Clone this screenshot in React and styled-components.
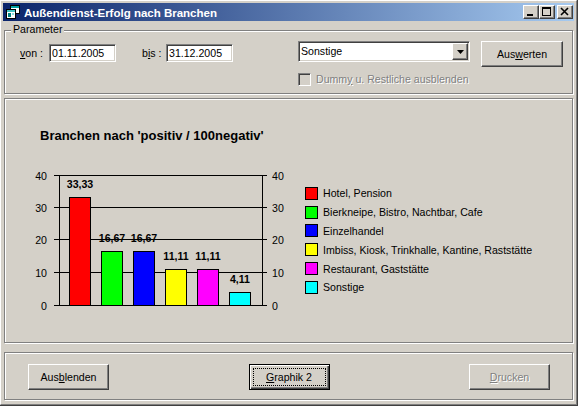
import React from 'react';
import styled, { createGlobalStyle, css } from 'styled-components';

const GlobalStyle = createGlobalStyle`
  html, body { margin: 0; padding: 0; background: #D4D0C8; }
  body { font-family: "Liberation Sans", Arial, sans-serif; font-size: 10.6px; color: #000; }
  * { box-sizing: border-box; }
`;

const FACE = '#D4D0C8';

const raised = css`
  border: 1px solid;
  border-color: #fff #404040 #404040 #fff;
  box-shadow: inset -1px -1px 0 #808080;
  background: ${FACE};
`;

const sunken = css`
  border: 1px solid;
  border-color: #808080 #fff #fff #808080;
  box-shadow: inset 1px 1px 0 #404040, inset -1px -1px 0 ${FACE};
`;

const etched = css`
  border: 1px solid #808080;
  box-shadow: inset 1px 1px 0 #fff, 1px 1px 0 #fff;
`;

const Window = styled.div`
  width: 578px;
  height: 406px;
  border-style: solid;
  border-color: #404040;
  border-width: 0 1px 1px 0;
  background: ${FACE};
`;

const Frame = styled.div`
  height: 100%;
  border: 1px solid;
  border-color: #fff #808080 #808080 #fff;
  padding: 2px;
  display: flex;
  flex-direction: column;
`;

const TitleBar = styled.div`
  height: 18px;
  flex: none;
  display: flex;
  align-items: flex-start;
  padding: 0 1px 0 2px;
  background: linear-gradient(to right, #0A246A, #A6CAF0);
`;

const TitleIcon = styled.svg`
  width: 16px;
  height: 16px;
  margin-top: 1px;
  flex: none;
`;

const TitleText = styled.div`
  flex: 1;
  margin-left: 3px;
  padding-top: 3px;
  line-height: 14px;
  font-size: 11.5px;
  font-weight: bold;
  color: #fff;
  white-space: nowrap;
`;

const CaptionButtons = styled.div`
  display: flex;
  margin-top: 2px;
`;

const CaptionButton = styled.div`
  ${raised};
  width: 16px;
  height: 14px;
  margin-left: ${(p) => (p.$gap ? '2px' : '0')};
  display: flex;
`;

const Content = styled.div`
  flex: 1;
  display: flex;
  flex-direction: column;
  padding: 9px 1px 0 1px;
`;

const GroupBox = styled.div`
  ${etched};
  position: relative;
  height: 64px;
  flex: none;
  padding: 10px 0 0 15px;
`;

const GroupLegend = styled.div`
  position: absolute;
  top: -8px;
  left: 6px;
  padding: 0 2px;
  line-height: 13px;
  background: ${FACE};
`;

const Row = styled.div`
  display: flex;
  align-items: flex-start;
`;

const FieldLabel = styled.label`
  width: ${(p) => p.$w}px;
  margin-left: ${(p) => p.$ml || 0}px;
  margin-top: 3px;
  height: 18px;
  line-height: 18px;
  white-space: nowrap;
`;

const DateInput = styled.input`
  ${sunken};
  width: 67px;
  height: 18px;
  margin-top: 3px;
  padding: 0 0 0 2px;
  background: #fff;
  font-family: inherit;
  font-size: 10.6px;
  color: #000;
  outline: none;
`;

const RightColumn = styled.div`
  margin-left: 65px;
  display: flex;
  flex-direction: column;
`;

const SelectBox = styled.div`
  ${sunken};
  width: 172px;
  height: 21px;
  padding: 1px;
  background: #fff;
  display: flex;
`;

const SelectValue = styled.div`
  flex: 1;
  padding-left: 1px;
  line-height: 17px;
`;

const DropButton = styled.div`
  ${raised};
  width: 16px;
  height: 17px;
  display: flex;
  align-items: center;
  justify-content: center;
`;

const CheckRow = styled.div`
  display: flex;
  align-items: center;
  gap: 5px;
  margin-top: 11px;
  height: 13px;
`;

const CheckBox = styled.div`
  ${sunken};
  width: 13px;
  height: 13px;
  background: ${FACE};
`;

const DisabledText = styled.span`
  color: #808080;
  text-shadow: 1px 1px 0 #fff;
  line-height: 13px;
  white-space: nowrap;
`;

const Button = styled.button`
  width: ${(p) => p.$w}px;
  height: ${(p) => p.$h}px;
  margin-left: ${(p) => p.$ml || 0}px;
  padding: 0;
  font-family: inherit;
  font-size: 10.6px;
  color: ${(p) => (p.disabled ? '#808080' : '#000')};
  text-shadow: ${(p) => (p.disabled ? '1px 1px 0 #fff' : 'none')};
  display: flex;
  align-items: center;
  justify-content: center;
  cursor: default;
  ${(p) =>
    p.$default
      ? css`
          border: 1px solid #000;
          background: ${FACE};
          box-shadow: inset 1px 1px 0 #fff, inset -1px -1px 0 #404040, inset -2px -2px 0 #808080;
          align-items: stretch;
        `
      : raised};
`;

const FocusRect = styled.span`
  flex: 1;
  margin: 3px;
  border: 1px dotted #000;
  display: flex;
  align-items: center;
  justify-content: center;
`;

const ChartPanel = styled.div`
  ${etched};
  height: 245px;
  flex: none;
  margin-top: 4px;
  padding: 29px 0 0 25px;
  display: flex;
  flex-direction: column;
`;

const ChartTitle = styled.div`
  margin-left: 10px;
  font-size: 13px;
  font-weight: bold;
  line-height: 15px;
  white-space: nowrap;
`;

const ChartRow = styled.div`
  display: flex;
  align-items: flex-start;
  margin-top: 22px;
`;

const ChartSvg = styled.svg`
  width: 260px;
  height: 150px;
  flex: none;
  overflow: visible;
`;

const AxisLabel = styled.text`
  font-family: "Liberation Sans", Arial, sans-serif;
  font-size: 10.6px;
  fill: #000;
`;

const ValueLabel = styled.text`
  font-family: "Liberation Sans", Arial, sans-serif;
  font-size: 10.6px;
  font-weight: bold;
  fill: #000;
`;

const Legend = styled.div`
  margin-left: 15px;
  margin-top: 19px;
  display: flex;
  flex-direction: column;
`;

const LegendItem = styled.div`
  height: 18.8px;
  display: flex;
  align-items: center;
  gap: 5px;
  white-space: nowrap;
`;

const Swatch = styled.span`
  width: 13px;
  height: 13px;
  border: 1px solid #000;
  background: ${(p) => p.$color};
  flex: none;
`;

const BottomPanel = styled.div`
  ${etched};
  height: 48px;
  flex: none;
  margin-top: 9px;
  padding: 11px 22px 0 23px;
  display: flex;
  justify-content: space-between;
  align-items: flex-start;
`;

const data = [
  { label: 'Hotel, Pension', value: 33.33, text: '33,33', color: '#FF0000' },
  { label: 'Bierkneipe, Bistro, Nachtbar, Cafe', value: 16.67, text: '16,67', color: '#00FF00' },
  { label: 'Einzelhandel', value: 16.67, text: '16,67', color: '#0000FF' },
  { label: 'Imbiss, Kiosk, Trinkhalle, Kantine, Raststätte', value: 11.11, text: '11,11', color: '#FFFF00' },
  { label: 'Restaurant, Gaststätte', value: 11.11, text: '11,11', color: '#FF00FF' },
  { label: 'Sonstige', value: 4.11, text: '4,11', color: '#00FFFF' },
];

const grid = [
  { v: 40, y: 10 },
  { v: 30, y: 42 },
  { v: 20, y: 74 },
  { v: 10, y: 107 },
  { v: 0, y: 140 },
];

function Chart() {
  const zero = 140;
  const k = 3.25;
  return (
    <ChartSvg viewBox="0 0 260 150">
      {grid.map((g) => (
        <line key={g.v} x1="24" x2="237" y1={g.y + 0.5} y2={g.y + 0.5} stroke="#000" strokeWidth="1" />
      ))}
      <line x1="29.5" x2="29.5" y1="10" y2="141" stroke="#000" />
      <line x1="232.5" x2="232.5" y1="10" y2="141" stroke="#000" />
      {grid.map((g) => (
        <AxisLabel key={'l' + g.v} x="17" y={g.y + 4.5} textAnchor="end">{g.v}</AxisLabel>
      ))}
      {grid.map((g) => (
        <AxisLabel key={'r' + g.v} x="242" y={g.y + 4.5}>{g.v}</AxisLabel>
      ))}
      {data.map((d, i) => {
        const top = Math.round(zero - d.value * k);
        const x = 39 + i * 32;
        return (
          <g key={i}>
            <rect x={x + 0.5} y={top + 0.5} width="21" height={zero - top} fill={d.color} stroke="#000" strokeWidth="1" />
            <ValueLabel x={x + 11} y={top - 9} textAnchor="middle">{d.text}</ValueLabel>
          </g>
        );
      })}
    </ChartSvg>
  );
}

function AppIcon() {
  return (
    <TitleIcon viewBox="0 0 16 16">
      <rect x="5.5" y="1.5" width="9" height="8" fill="#fff" stroke="#000" />
      <rect x="6" y="2" width="8" height="2" fill="#00A0A0" />
      <rect x="1.5" y="5.5" width="9" height="9" fill="#fff" stroke="#000" />
      <rect x="2" y="6" width="8" height="2" fill="#40C0C0" />
      <rect x="3" y="9" width="3" height="4" fill="#008080" />
      <rect x="7" y="9" width="2" height="2" fill="#80E0E0" />
    </TitleIcon>
  );
}

export default function App() {
  return (
    <>
      <GlobalStyle />
      <Window>
        <Frame>
          <TitleBar>
            <AppIcon />
            <TitleText>Außendienst-Erfolg nach Branchen</TitleText>
            <CaptionButtons>
              <CaptionButton>
                <svg width="14" height="12" viewBox="0 0 14 12">
                  <rect x="3" y="8" width="6" height="2" fill="#000" />
                </svg>
              </CaptionButton>
              <CaptionButton>
                <svg width="14" height="12" viewBox="0 0 14 12">
                  <rect x="2.5" y="1.5" width="8" height="8" fill="none" stroke="#000" />
                  <rect x="2" y="1" width="9" height="2" fill="#000" />
                </svg>
              </CaptionButton>
              <CaptionButton $gap>
                <svg width="14" height="12" viewBox="0 0 14 12">
                  <path d="M3 2L10 9M10 2L3 9" stroke="#000" strokeWidth="1.6" />
                </svg>
              </CaptionButton>
            </CaptionButtons>
          </TitleBar>
          <Content>
            <GroupBox>
              <GroupLegend>Parameter</GroupLegend>
              <Row>
                <FieldLabel $w={29}><u>v</u>on :</FieldLabel>
                <DateInput defaultValue="01.11.2005" />
                <FieldLabel $w={24} $ml={26}>b<u>i</u>s :</FieldLabel>
                <DateInput defaultValue="31.12.2005" />
                <RightColumn>
                  <SelectBox>
                    <SelectValue>Sonstige</SelectValue>
                    <DropButton>
                      <svg width="7" height="4" viewBox="0 0 7 4">
                        <path d="M0 0H7L3.5 4Z" fill="#000" />
                      </svg>
                    </DropButton>
                  </SelectBox>
                  <CheckRow>
                    <CheckBox />
                    <DisabledText>Dumm<u>y</u> u. Restliche ausblenden</DisabledText>
                  </CheckRow>
                </RightColumn>
                <Button $w={82} $h={26} $ml={11}>Aus<u>w</u>erten</Button>
              </Row>
            </GroupBox>
            <ChartPanel>
              <ChartTitle>Branchen nach 'positiv / 100negativ'</ChartTitle>
              <ChartRow>
                <Chart />
                <Legend>
                  {data.map((d) => (
                    <LegendItem key={d.label}>
                      <Swatch $color={d.color} />
                      {d.label}
                    </LegendItem>
                  ))}
                </Legend>
              </ChartRow>
            </ChartPanel>
            <BottomPanel>
              <Button $w={81} $h={26}>Aus<u>b</u>lenden</Button>
              <Button $w={81} $h={26} $default>
                <FocusRect><u>G</u>raphik 2</FocusRect>
              </Button>
              <Button $w={81} $h={26} disabled><u>D</u>rucken</Button>
            </BottomPanel>
          </Content>
        </Frame>
      </Window>
    </>
  );
}
